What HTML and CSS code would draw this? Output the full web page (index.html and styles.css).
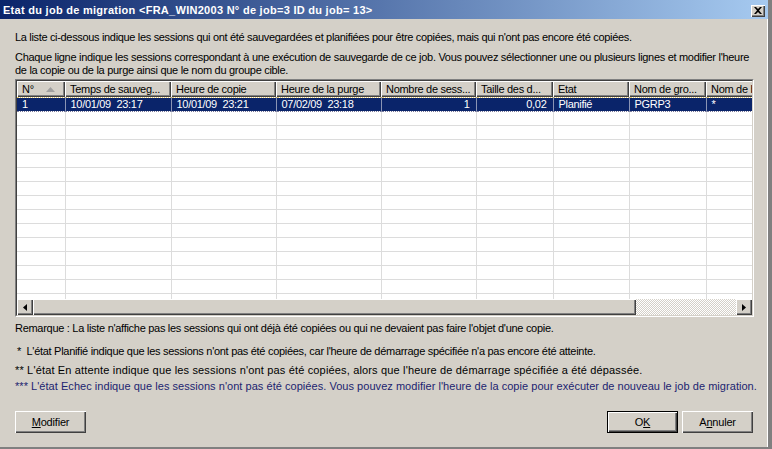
FILE: index.html
```html
<!DOCTYPE html>
<html lang="fr">
<head>
<meta charset="utf-8">
<title>Etat du job de migration</title>
<link rel="stylesheet" href="styles.css">
</head>
<body>
<div class="window">
  <div class="titlebar">
    <span class="title">Etat du job de migration &lt;FRA_WIN2003 N° de job=3 ID du job= 13&gt;</span>
    <span class="close"><svg width="8" height="7" viewBox="0 0 8 7"><path d="M0 0h2l2 2 2-2h2L5 3.5 8 7H6L4 5 2 7H0l3-3.5z" fill="#000"/></svg></span>
  </div>
  <div class="content">
    <p class="intro1">La liste ci-dessous indique les sessions qui ont été sauvegardées et planifiées pour être copiées, mais qui n'ont pas encore été copiées.</p>
    <p class="intro2">Chaque ligne indique les sessions correspondant à une exécution de sauvegarde de ce job. Vous pouvez sélectionner une ou plusieurs lignes et modifier l'heure de la copie ou de la purge ainsi que le nom du groupe cible.</p>
    <div class="grid">
      <div class="viewport">
        <table class="list">
          <colgroup>
            <col class="c1"><col class="c2"><col class="c3"><col class="c4"><col class="c5"><col class="c6"><col class="c7"><col class="c8"><col class="c9">
          </colgroup>
          <thead>
            <tr>
              <th><span class="hlabel">N°</span><svg class="sort" width="9" height="5" viewBox="0 0 9 5"><path d="M4.5 0L9 5H0z" fill="#a0a0a0"/></svg></th>
              <th>Temps de sauveg...</th>
              <th>Heure de copie</th>
              <th>Heure de la purge</th>
              <th>Nombre de sess...</th>
              <th>Taille des d...</th>
              <th>Etat</th>
              <th>Nom de gro...</th>
              <th>Nom de b</th>
            </tr>
          </thead>
          <tbody>
            <tr class="sel">
              <td>1</td><td>10/01/09&nbsp;&nbsp;23:17</td><td>10/01/09&nbsp;&nbsp;23:21</td><td>07/02/09&nbsp;&nbsp;23:18</td><td class="num">1</td><td class="num">0,02</td><td>Planifié</td><td>PGRP3</td><td>*</td>
            </tr>
            <tr><td></td><td></td><td></td><td></td><td></td><td></td><td></td><td></td><td></td></tr>
            <tr><td></td><td></td><td></td><td></td><td></td><td></td><td></td><td></td><td></td></tr>
            <tr><td></td><td></td><td></td><td></td><td></td><td></td><td></td><td></td><td></td></tr>
            <tr><td></td><td></td><td></td><td></td><td></td><td></td><td></td><td></td><td></td></tr>
            <tr><td></td><td></td><td></td><td></td><td></td><td></td><td></td><td></td><td></td></tr>
            <tr><td></td><td></td><td></td><td></td><td></td><td></td><td></td><td></td><td></td></tr>
            <tr><td></td><td></td><td></td><td></td><td></td><td></td><td></td><td></td><td></td></tr>
            <tr><td></td><td></td><td></td><td></td><td></td><td></td><td></td><td></td><td></td></tr>
            <tr><td></td><td></td><td></td><td></td><td></td><td></td><td></td><td></td><td></td></tr>
            <tr><td></td><td></td><td></td><td></td><td></td><td></td><td></td><td></td><td></td></tr>
            <tr><td></td><td></td><td></td><td></td><td></td><td></td><td></td><td></td><td></td></tr>
            <tr><td></td><td></td><td></td><td></td><td></td><td></td><td></td><td></td><td></td></tr>
            <tr><td></td><td></td><td></td><td></td><td></td><td></td><td></td><td></td><td></td></tr>
            <tr><td></td><td></td><td></td><td></td><td></td><td></td><td></td><td></td><td></td></tr>
            <tr><td></td><td></td><td></td><td></td><td></td><td></td><td></td><td></td><td></td></tr>
          </tbody>
        </table>
      </div>
      <div class="hscroll">
        <span class="sbtn"><svg width="4" height="7" viewBox="0 0 4 7"><path d="M4 0v7L0 3.5z" fill="#000"/></svg></span>
        <span class="thumb"></span>
        <span class="track"></span>
        <span class="sbtn"><svg width="4" height="7" viewBox="0 0 4 7"><path d="M0 0v7l4-3.5z" fill="#000"/></svg></span>
      </div>
    </div>
    <p class="remark">Remarque : La liste n'affiche pas les sessions qui ont déjà été copiées ou qui ne devaient pas faire l'objet d'une copie.</p>
    <p class="note n1">*&nbsp;&nbsp;L'état Planifié indique que les sessions n'ont pas été copiées, car l'heure de démarrage spécifiée n'a pas encore été atteinte.</p>
    <p class="note n2">** L'état En attente indique que les sessions n'ont pas été copiées, alors que l'heure de démarrage spécifiée a été dépassée.</p>
    <p class="note n3">*** L'état Echec indique que les sessions n'ont pas été copiées. Vous pouvez modifier l'heure de la copie pour exécuter de nouveau le job de migration.</p>
    <div class="buttons">
      <button class="btn"><u>M</u>odifier</button>
      <div class="right">
        <button class="btn default">O<u>K</u></button>
        <button class="btn">A<u>n</u>nuler</button>
      </div>
    </div>
  </div>
</div>
</body>
</html>
```
FILE: styles.css
```css
* { box-sizing: border-box; }
html, body { margin: 0; padding: 0; }
body {
  width: 772px;
  height: 449px;
  overflow: hidden;
  background: #d4d0c8;
  font-family: "Liberation Sans", Arial, sans-serif;
  font-size: 11px;
  letter-spacing: -0.3px;
  color: #000;
}
.window {
  width: 772px;
  height: 449px;
  border-right: 4px solid #808080;
  border-bottom: 2px solid #808080;
  box-shadow: inset -1px 0 #ffffff;
  overflow: hidden;
}
.titlebar {
  height: 19px;
  background: linear-gradient(to right, #0a246a, #a6caf0);
  display: flex;
  align-items: center;
  justify-content: space-between;
  padding: 0 2px 0 3px;
}
.title {
  color: #fff;
  font-weight: bold;
  font-size: 11px;
  letter-spacing: 0.28px;
  white-space: nowrap;
}
.close {
  width: 14px;
  height: 12px;
  margin-top: 2px;
  margin-right: 1px;
  background: #d4d0c8;
  box-shadow: inset 1px 1px #fff, inset -1px -1px #404040, inset -2px -2px #808080;
  display: flex;
  align-items: center;
  justify-content: center;
}
.content {
  padding: 0 15px 0 15px;
}
p { margin: 0; line-height: 13px; white-space: nowrap; }
.intro1 { margin-top: 12px; letter-spacing: -0.33px; }
.intro2 { margin-top: 7px; white-space: normal; width: 742px; }
.grid {
  margin-top: 2px;
  width: 739px;
  border: 1px solid;
  border-color: #808080 #fff #fff #808080;
}
.viewport {
  border: 1px solid;
  border-color: #404040 #d4d0c8 transparent #404040;
  border-bottom: 0;
  height: 219px;
  overflow: hidden;
  background: #fff;
}
.list {
  border-collapse: collapse;
  table-layout: fixed;
  width: 790px;
}
.c1 { width: 48px; }
.c2 { width: 106px; }
.c3 { width: 105px; }
.c4 { width: 105px; }
.c5 { width: 95px; }
.c6 { width: 77px; }
.c7 { width: 76px; }
.c8 { width: 77px; }
.c9 { width: 101px; }
.list th {
  height: 16px;
  padding: 0 0 0 5px;
  background: #d4d0c8;
  font-weight: normal;
  text-align: left;
  white-space: nowrap;
  overflow: hidden;
  box-shadow: inset 1px 1px #fff, inset -1px -1px #404040, inset -2px -2px #808080;
}
.list th .hlabel { display: inline-block; width: 24px; }
.sort { vertical-align: 1px; }
.list td {
  height: 14px;
  padding: 0 0 0 5px;
  border-right: 1px solid #dcdcdc;
  border-bottom: 1px solid #dcdcdc;
  white-space: nowrap;
  overflow: hidden;
  line-height: 13px;
}
.list td.num { text-align: right; padding-right: 6px; }
.list tr.sel td {
  background: #0a246a;
  color: #fff;
  border-top: 1px dotted #e6c86e;
  border-bottom: 1px dotted #7a7a9a;
  border-right-color: #8a94b4;
}
.hscroll {
  display: flex;
  height: 16px;
  border-left: 1px solid #404040;
  border-right: 1px solid #d4d0c8;
  border-bottom: 1px solid #d4d0c8;
  box-sizing: content-box;
}
.sbtn {
  width: 16px;
  height: 16px;
  background: #d4d0c8;
  box-shadow: inset 1px 1px #fff, inset -1px -1px #404040, inset -2px -2px #808080;
  display: flex;
  align-items: center;
  justify-content: center;
  flex: none;
}
.thumb {
  width: 603px;
  height: 16px;
  background: #d4d0c8;
  box-shadow: inset 1px 1px #fff, inset -1px -1px #404040, inset -2px -2px #808080;
  flex: none;
}
.track {
  flex: 1;
  height: 16px;
  background: repeating-conic-gradient(#ffffff 0 25%, #d4d0c8 0 50%) 0 0 / 2px 2px;
}
.remark { margin-top: 5px; letter-spacing: -0.29px; }
.n1 { margin-top: 10px; padding-left: 2px; letter-spacing: -0.29px; }
.n2 { margin-top: 6px; letter-spacing: 0.16px; }
.n3 { margin-top: 3px; color: #1c2470; letter-spacing: 0.04px; }
.buttons {
  margin-top: 18px;
  display: flex;
  justify-content: space-between;
  width: 738px;
}
.right { display: flex; gap: 4px; }
.btn {
  width: 71px;
  height: 22px;
  padding: 0;
  border: 0;
  background: #d4d0c8;
  font-family: "Liberation Sans", Arial, sans-serif;
  font-size: 11px;
  letter-spacing: -0.2px;
  color: #000;
  box-shadow: inset 1px 1px #fff, inset -1px -1px #404040, inset -2px -2px #808080;
}
.btn.default {
  box-shadow: inset 0 0 0 1px #000, inset 2px 2px #fff, inset -2px -2px #404040, inset -3px -3px #808080;
}
```
